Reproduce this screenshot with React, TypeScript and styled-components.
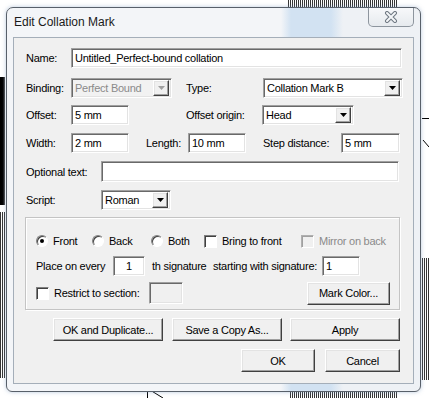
import React from 'react';
import styled, { createGlobalStyle, css } from 'styled-components';

const GlobalStyle = createGlobalStyle`
  html, body {
    margin: 0;
    padding: 0;
  }
  body {
    background: #fff;
    font-family: "Liberation Sans", Arial, sans-serif;
    font-size: 11px;
    letter-spacing: -0.25px;
    color: #000;
  }
`;

// classic 3D edges
const raised = css`
  border-top: 1px solid #fff;
  border-left: 1px solid #fff;
  border-right: 1px solid #404040;
  border-bottom: 1px solid #404040;
  box-shadow: inset -1px -1px 0 #a0a0a0, inset 1px 1px 0 #e3e3e3;
`;

const sunken = css`
  border-top: 1px solid #a0a0a0;
  border-left: 1px solid #a0a0a0;
  border-right: 1px solid #fff;
  border-bottom: 1px solid #fff;
  box-shadow: inset 1px 1px 0 #696969, inset -1px -1px 0 #e3e3e3;
`;

const Desktop = styled.div`
  position: relative;
  width: 429px;
  height: 398px;
  overflow: hidden;
  background: #fff;
  padding: 7px 8px 0 6px;
  box-sizing: border-box;
`;

const Dither = styled.div<{ $x: number; $y: number; $w: number; $h: number }>`
  position: absolute;
  left: ${({ $x }) => $x}px;
  top: ${({ $y }) => $y}px;
  width: ${({ $w }) => $w}px;
  height: ${({ $h }) => $h}px;
  background: repeating-linear-gradient(90deg, #111 0 1px, #fff 1px 2px);
  opacity: 0.85;
`;

const BlackBar = styled.div`
  position: absolute;
  left: 0;
  top: 77px;
  width: 5px;
  height: 128px;
  background: linear-gradient(90deg, #000 0 3px, #555 5px);
`;

const Backdrop = styled.svg`
  position: absolute;
  left: 0;
  top: 0;
`;

const Window = styled.div`
  position: relative;
  z-index: 1;
  width: 415px;
  height: 385px;
  box-sizing: border-box;
  border: 1px solid #58606a;
  border-radius: 7px 7px 6px 6px;
  background: linear-gradient(90deg, #f3f5f8 0 274px, #d2e2f2 284px 324px, #eef1f5 336px 100%);
  box-shadow: 0 0 4px rgba(120, 150, 190, 0.5);
  display: flex;
  flex-direction: column;
`;

const TitleBar = styled.div`
  height: 29px;
  display: flex;
  justify-content: space-between;
  align-items: flex-start;
  padding: 0 6px 0 7px;
`;

const Title = styled.span`
  font-size: 12px;
  letter-spacing: 0;
  color: #1a1a1a;
  line-height: 29px;
`;

const CloseButton = styled.div`
  width: 46px;
  height: 19px;
  box-sizing: border-box;
  border: 1px solid #8d959e;
  border-top: none;
  border-radius: 0 0 5px 5px;
  background: linear-gradient(#f7f8fa, #e6eaee);
  display: flex;
  align-items: center;
  justify-content: center;
`;

const Client = styled.div`
  margin: 0 6px;
  height: 347px;
  box-sizing: border-box;
  border: 1px solid #a4aeb9;
  background: #f0f0f0;
  padding: 10px 0 0 12px;
  display: flex;
  flex-direction: column;
`;

const Row = styled.div<{ $gap?: number; $h?: number }>`
  display: flex;
  align-items: center;
  height: ${({ $h }) => $h ?? 20}px;
  margin-top: ${({ $gap }) => $gap ?? 0}px;
  flex: none;
`;

const Label = styled.span<{ $w?: number; $ml?: number; $muted?: boolean }>`
  flex: none;
  white-space: nowrap;
  width: ${({ $w }) => ($w ? `${$w}px` : 'auto')};
  margin-left: ${({ $ml }) => $ml ?? 0}px;
  color: ${({ $muted }) => ($muted ? '#8a8a8a' : '#000')};
`;

const TextBox = styled.div<{ $w: number; $h?: number; $center?: boolean; $disabled?: boolean; $ml?: number }>`
  ${sunken};
  flex: none;
  box-sizing: border-box;
  width: ${({ $w }) => $w}px;
  height: ${({ $h }) => $h ?? 20}px;
  margin-left: ${({ $ml }) => $ml ?? 0}px;
  background: ${({ $disabled }) => ($disabled ? '#f0f0f0' : '#fff')};
  padding: 0 3px;
  display: flex;
  align-items: center;
  justify-content: ${({ $center }) => ($center ? 'center' : 'flex-start')};
  white-space: nowrap;
  overflow: hidden;
`;

const Combo = styled.div<{ $w: number; $disabled?: boolean }>`
  ${sunken};
  flex: none;
  box-sizing: border-box;
  width: ${({ $w }) => $w}px;
  height: 20px;
  padding: 2px 2px 2px 3px;
  background: ${({ $disabled }) => ($disabled ? '#f2f2f2' : '#fff')};
  color: ${({ $disabled }) => ($disabled ? '#8a8a8a' : '#000')};
  display: flex;
  align-items: center;
`;

const ComboText = styled.span`
  flex: 1;
  white-space: nowrap;
  overflow: hidden;
`;

const ComboArrow = styled.span`
  ${raised};
  flex: none;
  box-sizing: border-box;
  width: 16px;
  height: 16px;
  background: #f0f0f0;
  display: flex;
  align-items: center;
  justify-content: center;
`;

const GroupBox = styled.div`
  flex: none;
  width: 375px;
  height: 93px;
  margin: 7px 0 0 -1px;
  box-sizing: border-box;
  border: 1px solid #c4c4c4;
  box-shadow: inset 1px 1px 0 #fff, 1px 1px 0 #fff;
  padding: 16px 0 0 10px;
  display: flex;
  flex-direction: column;
`;

const Option = styled.div<{ $w?: number; $muted?: boolean }>`
  flex: none;
  display: flex;
  align-items: center;
  gap: 5px;
  width: ${({ $w }) => ($w ? `${$w}px` : 'auto')};
  color: ${({ $muted }) => ($muted ? '#8a8a8a' : '#000')};
  white-space: nowrap;
`;

const Radio = styled.span<{ $on?: boolean }>`
  flex: none;
  box-sizing: border-box;
  width: 12px;
  height: 12px;
  border-radius: 50%;
  border: 1px solid;
  border-color: #808080 #fff #fff #808080;
  box-shadow: inset 1px 1px 0 #404040;
  background: #fff;
  display: flex;
  align-items: center;
  justify-content: center;
  &::after {
    content: '';
    width: 4px;
    height: 4px;
    border-radius: 50%;
    background: ${({ $on }) => ($on ? '#000' : 'transparent')};
  }
`;

const Check = styled.span<{ $disabled?: boolean }>`
  flex: none;
  box-sizing: border-box;
  width: 13px;
  height: 13px;
  border: 1px solid;
  border-color: ${({ $disabled }) => ($disabled ? '#b0b0b0 #fff #fff #b0b0b0' : '#808080 #fff #fff #808080')};
  box-shadow: inset 1px 1px 0 ${({ $disabled }) => ($disabled ? '#a0a0a0' : '#404040')};
  background: ${({ $disabled }) => ($disabled ? '#f0f0f0' : '#fff')};
`;

const Button = styled.div<{ $w: number; $ml?: number }>`
  ${raised};
  flex: none;
  box-sizing: border-box;
  width: ${({ $w }) => $w}px;
  height: 23px;
  margin-left: ${({ $ml }) => $ml ?? 0}px;
  background: #f0f0f0;
  display: flex;
  align-items: center;
  justify-content: center;
  white-space: nowrap;
`;

const ButtonRow = styled.div<{ $gap: number }>`
  flex: none;
  width: 374px;
  display: flex;
  justify-content: flex-end;
  margin-top: ${({ $gap }) => $gap}px;
`;

const Arrow: React.FC<{ muted?: boolean }> = ({ muted }) => (
  <svg width="7" height="4" viewBox="0 0 7 4">
    <path d="M0 0h7L3.5 4z" fill={muted ? '#a0a0a0' : '#000'} />
  </svg>
);

const CloseGlyph = () => (
  <svg width="14" height="12" viewBox="0 0 14 12">
    <path d="M3 2l8 8M11 2l-8 8" stroke="#6e7781" strokeWidth="4" strokeLinecap="round" />
    <path d="M3 2l8 8M11 2l-8 8" stroke="#f4f6f8" strokeWidth="2" strokeLinecap="round" />
  </svg>
);

const App: React.FC = () => (
  <>
    <GlobalStyle />
    <Desktop>
      <Dither $x={288} $y={0} $w={110} $h={7} />
      <BlackBar />
      <Dither $x={0} $y={212} $w={6} $h={166} />
      <Dither $x={422} $y={258} $w={7} $h={122} />
      <Dither $x={290} $y={392} $w={108} $h={6} />
      <Backdrop width="429" height="398">
        <path d="M147.5 388v10M150 390l13 8M422 118.5h7M423 140l6 7" stroke="#000" strokeWidth="1" fill="none" />
      </Backdrop>

      <Window>
        <TitleBar>
          <Title>Edit Collation Mark</Title>
          <CloseButton>
            <CloseGlyph />
          </CloseButton>
        </TitleBar>

        <Client>
          <Row>
            <Label $w={45}>Name:</Label>
            <TextBox $w={331}>Untitled_Perfect-bound collation</TextBox>
          </Row>

          <Row $gap={10}>
            <Label $w={45}>Binding:</Label>
            <Combo $w={101} $disabled>
              <ComboText>Perfect Bound</ComboText>
              <ComboArrow>
                <Arrow muted />
              </ComboArrow>
            </Combo>
            <Label $w={77} $ml={14}>Type:</Label>
            <Combo $w={140}>
              <ComboText>Collation Mark B</ComboText>
              <ComboArrow>
                <Arrow />
              </ComboArrow>
            </Combo>
          </Row>

          <Row $gap={7}>
            <Label $w={45}>Offset:</Label>
            <TextBox $w={58}>5 mm</TextBox>
            <Label $w={76} $ml={57}>Offset origin:</Label>
            <Combo $w={92}>
              <ComboText>Head</ComboText>
              <ComboArrow>
                <Arrow />
              </ComboArrow>
            </Combo>
          </Row>

          <Row $gap={8}>
            <Label $w={45}>Width:</Label>
            <TextBox $w={58}>2 mm</TextBox>
            <Label $w={42} $ml={17}>Length:</Label>
            <TextBox $w={58}>10 mm</TextBox>
            <Label $w={78} $ml={17}>Step distance:</Label>
            <TextBox $w={59}>5 mm</TextBox>
          </Row>

          <Row $gap={8} $h={21}>
            <Label $w={75}>Optional text:</Label>
            <TextBox $w={298} $h={21} />
          </Row>

          <Row $gap={8}>
            <Label $w={75}>Script:</Label>
            <Combo $w={70}>
              <ComboText>Roman</ComboText>
              <ComboArrow>
                <Arrow />
              </ComboArrow>
            </Combo>
          </Row>

          <GroupBox>
            <Row $h={14}>
              <Option $w={56}>
                <Radio $on />
                Front
              </Option>
              <Option $w={59}>
                <Radio />
                Back
              </Option>
              <Option $w={53}>
                <Radio />
                Both
              </Option>
              <Option $w={97}>
                <Check />
                Bring to front
              </Option>
              <Option $muted>
                <Check $disabled />
                Mirror on back
              </Option>
            </Row>

            <Row $gap={8}>
              <Label $w={77}>Place on every</Label>
              <TextBox $w={32} $center>1</TextBox>
              <Label $w={61} $ml={7}>th signature</Label>
              <Label $w={109}>starting with signature:</Label>
              <TextBox $w={38}>1</TextBox>
            </Row>

            <Row $gap={6} $h={22}>
              <Option $w={113}>
                <Check />
                Restrict to section:
              </Option>
              <TextBox $w={34} $h={22} $disabled />
              <Button $w={83} $ml={124}>Mark Color...</Button>
            </Row>
          </GroupBox>

          <ButtonRow $gap={8}>
            <Button $w={110}>OK and Duplicate...</Button>
            <Button $w={110} $ml={9}>Save a Copy As...</Button>
            <Button $w={110} $ml={8}>Apply</Button>
          </ButtonRow>

          <ButtonRow $gap={8}>
            <Button $w={74}>OK</Button>
            <Button $w={75} $ml={10}>Cancel</Button>
          </ButtonRow>
        </Client>
      </Window>
    </Desktop>
  </>
);

export default App;
